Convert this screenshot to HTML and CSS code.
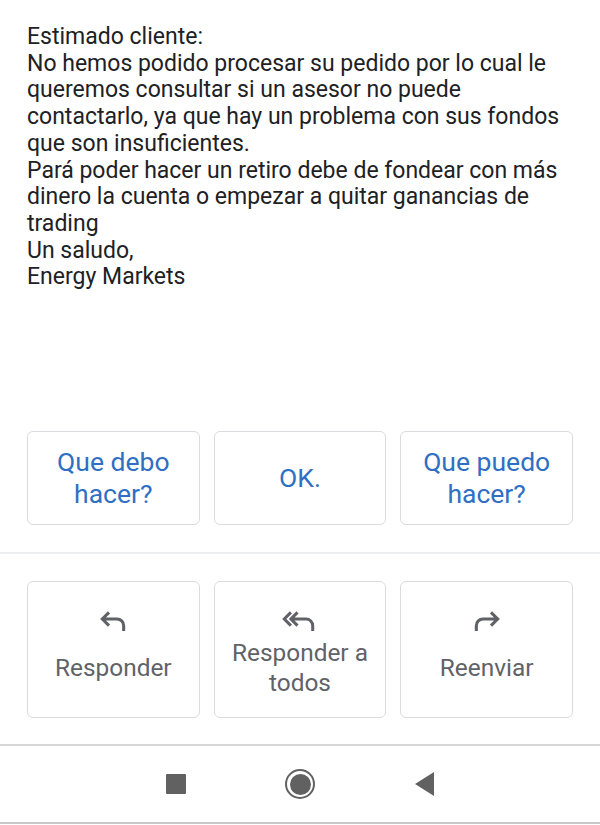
FILE: index.html
```html
<!DOCTYPE html>
<html lang="es">
<head>
<meta charset="utf-8">
<title>Mensaje</title>
<link rel="stylesheet" href="styles.css">
</head>
<body>
<div class="screen">
  <div class="message">
    <p>Estimado cliente:<br>No hemos podido procesar su pedido por lo cual le queremos consultar si un asesor no puede contactarlo, ya que hay un problema con sus fondos que son insuficientes.<br>Pará poder hacer un retiro debe de fondear con más dinero la cuenta o empezar a quitar ganancias de trading<br>Un saludo,<br>Energy Markets</p>
  </div>

  <div class="smart-replies">
    <div class="chip">Que debo<br>hacer?</div>
    <div class="chip">OK.</div>
    <div class="chip">Que puedo<br>hacer?</div>
  </div>

  <div class="divider"></div>

  <div class="actions">
    <div class="action">
      <svg class="icon" viewBox="0 0 24 24" width="32" height="32"><path d="M9 5.5 L4 10.5 L9 15.5 M4 10.5 H15 a5 5 0 0 1 5 5 V19.5"/></svg>
      <div class="label">Responder</div>
    </div>
    <div class="action">
      <svg class="icon" viewBox="0 0 28 24" width="37" height="32"><path d="M7.5 5.5 L2.5 10.5 L7.5 15.5 M12.5 5.5 L7.5 10.5 L12.5 15.5 M7.5 10.5 H19 a5 5 0 0 1 5 5 V19.5"/></svg>
      <div class="label">Responder a<br>todos</div>
    </div>
    <div class="action">
      <svg class="icon" viewBox="0 0 24 24" width="32" height="32"><path d="M15 5.5 L20 10.5 L15 15.5 M20 10.5 H9 a5 5 0 0 0 -5 5 V19.5"/></svg>
      <div class="label">Reenviar</div>
    </div>
  </div>

  <div class="navbar">
    <div class="nav-item"><span class="nav-square"></span></div>
    <div class="nav-item"><span class="nav-home"><span class="nav-home-dot"></span></span></div>
    <div class="nav-item"><span class="nav-back"></span></div>
  </div>
</div>
</body>
</html>
```

FILE: styles.css
```css
html, body {
  margin: 0;
  padding: 0;
  background: #ffffff;
}

body {
  font-family: Roboto, "Liberation Sans", sans-serif;
  color: #202124;
}

.screen {
  width: 600px;
  height: 825px;
  display: flex;
  flex-direction: column;
  overflow: hidden;
}

.message {
  height: 431px;
  padding: 24px 27px 0 27px;
  box-sizing: border-box;
}

.message p {
  margin: 0;
  font-size: 23px;
  line-height: 26.7px;
  color: #202124;
}

.smart-replies {
  display: grid;
  grid-template-columns: repeat(3, 1fr);
  gap: 14px;
  padding: 0 27px 0 27px;
}

.chip {
  height: 94px;
  box-sizing: border-box;
  border: 1.5px solid #d9dbde;
  border-radius: 6px;
  display: flex;
  align-items: center;
  justify-content: center;
  text-align: center;
  font-size: 26.5px;
  line-height: 32px;
  color: #2f6fc4;
}

.divider {
  height: 2px;
  background: #eceef0;
  margin-top: 27px;
}

.actions {
  display: grid;
  grid-template-columns: repeat(3, 1fr);
  gap: 14px;
  padding: 0 27px;
  margin-top: 27px;
}

.action {
  height: 137px;
  box-sizing: border-box;
  border: 1.5px solid #d9dbde;
  border-radius: 6px;
  display: flex;
  flex-direction: column;
  align-items: center;
  padding: 23px 0 14px;
  color: #5f6368;
}

.icon {
  flex: none;
  fill: none;
  stroke: #5f6368;
  stroke-width: 2.3;
  stroke-linejoin: miter;
}

.label {
  flex: 1;
  display: flex;
  align-items: center;
  justify-content: center;
  text-align: center;
  font-size: 24.4px;
  line-height: 30px;
  color: #5f6368;
  margin-top: -5px;
}

.navbar {
  margin-top: 26px;
  border-top: 2px solid #d6d6d6;
  border-bottom: 2px solid #c8c8c8;
  height: 76px;
  display: grid;
  grid-template-columns: 124px 124px 124px;
  justify-content: center;
  align-items: center;
}

.nav-item {
  display: flex;
  justify-content: center;
  align-items: center;
  height: 100%;
}

.nav-square {
  width: 20px;
  height: 20px;
  background: #616161;
  border-radius: 1px;
}

.nav-home {
  width: 30px;
  height: 30px;
  box-sizing: border-box;
  border: 2.5px solid #616161;
  border-radius: 50%;
  display: flex;
  align-items: center;
  justify-content: center;
}

.nav-home-dot {
  width: 21px;
  height: 21px;
  border-radius: 50%;
  background: #616161;
}

.nav-back {
  width: 0;
  height: 0;
  border-top: 12px solid transparent;
  border-bottom: 12px solid transparent;
  border-right: 19px solid #616161;
}
```
